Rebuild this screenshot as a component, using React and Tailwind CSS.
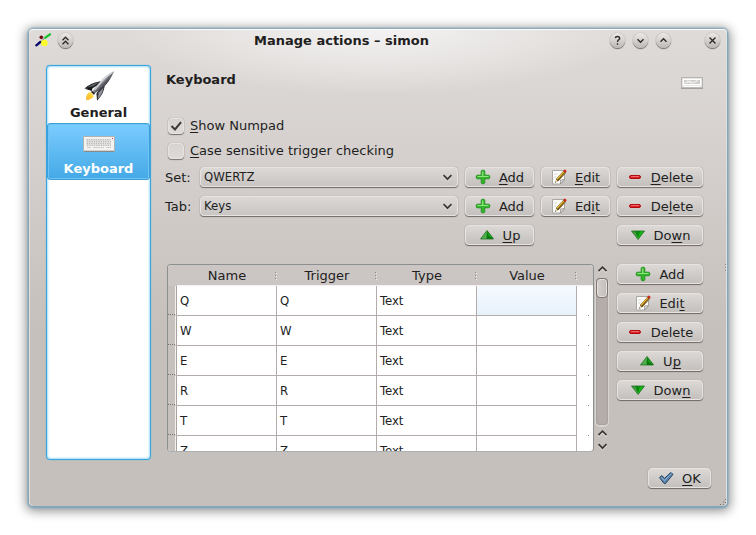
import React from "react";

const ROWS = ["Q", "W", "E", "R", "T", "Z"];

const BUTTON =
  "flex h-5 items-center justify-center gap-2 rounded-[4px] border border-[#e6e3e1] bg-linear-to-b from-[#dbd8d6] to-[#c4c0bd] text-[#221e1e] shadow-[0_1px_1px_#6f6966,0_0_1px_#968f8c]";

function Key({ children }) {
  return (
    <span className="underline underline-offset-2 [text-decoration-skip-ink:none]">{children}</span>
  );
}

/* Label with one underlined access key, given by its index. */
function Mnemonic({ text, at }) {
  if (at === undefined) return <span className="pt-[2px]">{text}</span>;
  return (
    <span className="pt-[2px]">
      {text.slice(0, at)}
      <Key>{text[at]}</Key>
      {text.slice(at + 1)}
    </span>
  );
}

function PlusIcon() {
  return (
    <svg width="16" height="16" viewBox="0 0 16 16" aria-hidden="true">
      <path
        d="M6.200 2.200q0-1 1.800-1t1.800 1v4h4q1 0 1 1.800t-1 1.800h-4v4q0 1-1.800 1t-1.800-1v-4h-4q-1 0-1-1.800t1-1.800h4z"
        fill="#35b52c"
        stroke="#168a12"
        strokeWidth=".8"
      />
      <path d="M7.700 2.500V7.500M2.500 7.500h11" stroke="#8be67c" strokeWidth="1.200" fill="none" />
    </svg>
  );
}

function MinusIcon() {
  return (
    <svg width="16" height="16" viewBox="0 0 16 16" aria-hidden="true">
      <rect x="2.500" y="6.500" width="11" height="3" rx="1.500" fill="#dc1f22" stroke="#b00a10" />
      <path d="M4 7.500h8" stroke="#ee6c6a" />
    </svg>
  );
}

function EditIcon() {
  return (
    <svg width="16" height="16" viewBox="0 0 16 16" aria-hidden="true">
      <path d="M1.500 1.500h12v9.500l-4 4h-8z" fill="#fbfbfa" stroke="#a9a6a3" />
      <path d="M13.500 10.500l-4 .5v4z" fill="#dddbd9" stroke="#8d8a87" strokeWidth=".7" />
      <path d="M3.200 5h3M3.200 8h2" stroke="#d6d4d2" />
      <path d="M4.500 13.200l1-3.700L12.600 1.800l2.300 1.900-7.200 8z" fill="#3a2c10" />
      <path d="M6 10.200l7-7.500" stroke="#e9b83b" strokeWidth="1.500" />
      <path d="M7.400 11.300l7-7.700" stroke="#c88f1c" strokeWidth=".8" />
      <path d="M4.300 13.500l.9-3 1.900 1.700z" fill="#f0d9a0" />
      <path d="M4.200 13.700l.4-1.300.8.800z" fill="#111" />
      <path d="M12.200 2l1.300-1.500q1.600.2 2.200 1.700l-1.200 1.600z" fill="#d0271f" />
    </svg>
  );
}

function UpIcon() {
  return (
    <svg width="16" height="16" viewBox="0 0 16 16" aria-hidden="true">
      <path d="M8 3.500L1.500 12h7z" fill="#4fae4c" />
      <path d="M8 3.500l6.500 8.500H7.500z" fill="#067a0a" />
      <path d="M8 3.500l1.500 5.500 5 2.500z" fill="#19a51a" />
      <path d="M8 3.500L1.500 12h13z" fill="none" stroke="#256e24" strokeWidth=".8" />
    </svg>
  );
}

function DownIcon() {
  return (
    <svg width="16" height="16" viewBox="0 0 16 16" aria-hidden="true">
      <path d="M1.500 4h7v8.500z" fill="#3f9d3c" />
      <path d="M7.500 4h7L8 12.500z" fill="#12b512" />
      <path d="M5 4h5l-2 7z" fill="#088a0c" />
      <path d="M1.500 4h13L8 12.500z" fill="none" stroke="#256e24" strokeWidth=".8" />
    </svg>
  );
}

function OkIcon() {
  return (
    <svg width="16" height="16" viewBox="0 0 16 16" aria-hidden="true">
      <path
        d="M1.500 7.500l2.200-1.800 3 2.600 6-5.700 2.300 1.700-7.300 9q-.9.800-1.800 0z"
        fill="#5c84ad"
        stroke="#24405f"
      />
      <path d="M3 7.300l3.500 3.200 7-6.800" fill="none" stroke="#93b6d6" strokeWidth="1" />
    </svg>
  );
}

function Chevron({ up, className }) {
  return (
    <svg width="11" height="7" viewBox="0 0 11 7" className={className} aria-hidden="true">
      <path
        d={up ? "M1.500 6.200l4-4 4 4" : "M1.500 2.200l4 4 4-4"}
        fill="none"
        stroke="#f2f0ef"
        strokeWidth="1.500"
      />
      <path
        d={up ? "M1.500 5.200l4-4 4 4" : "M1.500 1.200l4 4 4-4"}
        fill="none"
        stroke="#3b3735"
        strokeWidth="1.700"
      />
    </svg>
  );
}

const ICONS = {
  add: PlusIcon,
  edit: EditIcon,
  delete: MinusIcon,
  up: UpIcon,
  down: DownIcon,
  ok: OkIcon,
};

function IconButton({ icon, text, at, className = "" }) {
  const Icon = ICONS[icon];
  return (
    <button type="button" className={`${BUTTON} ${className}`}>
      <Icon />
      <Mnemonic text={text} at={at} />
    </button>
  );
}

function AppLogo() {
  return (
    <svg width="16" height="14" viewBox="0 0 48 42" aria-hidden="true">
      <path d="M4 37l12-10" stroke="#0a0a6e" strokeWidth="7" strokeLinecap="round" />
      <path d="M16 28l12-12" stroke="#222" strokeWidth="2" />
      <path d="M31 14L45 4" stroke="#15c328" strokeWidth="7" strokeLinecap="round" />
      <circle cx="19" cy="13" r="5.500" fill="#6e0d10" />
      <circle cx="28" cy="30" r="10" fill="#fbfb2c" />
    </svg>
  );
}

function Rocket() {
  return (
    <svg width="32" height="32" viewBox="0 0 96 96" aria-hidden="true">
      <defs>
        <linearGradient id="hull" x1=".3" y1=".3" x2=".65" y2=".65">
          <stop offset="0" stopColor="#55585e" />
          <stop offset=".35" stopColor="#d5d7dc" />
          <stop offset=".6" stopColor="#6e7178" />
          <stop offset="1" stopColor="#232427" />
        </linearGradient>
        <linearGradient id="flame" x1="1" y1="0" x2="0" y2="1">
          <stop offset="0" stopColor="#fff6a0" />
          <stop offset=".5" stopColor="#ffc928" />
          <stop offset="1" stopColor="#f5a000" stopOpacity=".7" />
        </linearGradient>
      </defs>
      <path d="M16 70q-10 10-8 24 16-2 24-12l-6-14z" fill="url(#flame)" />
      <path d="M55 34Q22 40 3 57l24 0 14-8z" fill="#1d1f22" />
      <path d="M50 37Q26 42 10 54l20-4z" fill="#5d6168" />
      <path d="M66 48Q62 76 42 95l-2-22 10-16z" fill="#2b2d31" />
      <path d="M62 54Q58 76 44 90l3-20z" fill="#8d9097" />
      <path d="M95 4Q66 16 51 37L27 66l7 7 28-20Q80 38 95 4z" fill="url(#hull)" />
      <path d="M91 8Q68 20 55 38L36 62" fill="none" stroke="#f3f4f6" strokeWidth="2" />
      <path d="M26 65L4 58l24-5z" fill="#17181a" />
      <path d="M25 66l9 9" stroke="#1b1c1e" strokeWidth="5" />
    </svg>
  );
}

function KeyboardIcon() {
  return (
    <svg width="32" height="16" viewBox="0 0 32 16" aria-hidden="true">
      <rect x=".5" y=".5" width="31" height="14.500" rx=".5" fill="#f3f2f1" stroke="#b3b1af" />
      <path d="M1 15.500h30" stroke="#8c8987" />
      <path d="M3.500 3.500h24M4 5.500h24M3.500 7.500h24M4 9.500h24" stroke="#b4b2b0" strokeDasharray="1.300 1" />
      <path d="M3 4.500h25M3 6.500h25M3 8.500h25" stroke="#dedcdb" />
      <path d="M4 11.500h4M10 11.500h11M23 11.500h5" stroke="#cfcdcb" />
      <path d="M29 2.500h1" stroke="#d33" />
    </svg>
  );
}

function SmallKeyboardIcon() {
  return (
    <svg width="22" height="12" viewBox="0 0 22 12" aria-hidden="true">
      <rect x=".5" y=".5" width="21" height="10.500" fill="#e9e8e7" stroke="#b5b2b0" />
      <path d="M0 11.200h22" stroke="#94908e" />
      <rect x="2.500" y="2.500" width="17" height="5" fill="#cfcecd" stroke="#fff" />
      <path d="M4 6l5-2 3 2 5-2.500M6 3.500l4 3" fill="none" stroke="#f8f8f8" />
      <path d="M3 9.500h16" stroke="#fff" />
    </svg>
  );
}

function TitleButton({ label, children, className = "" }) {
  return (
    <button
      type="button"
      aria-label={label}
      className={`flex size-[15px] shrink-0 items-center justify-center rounded-full bg-linear-to-b from-[#eceae9] to-[#bdb8b5] shadow-[0_1px_1px_#6f6a68,0_0_1px_#7d7774] ${className}`}
    >
      <svg width="15" height="15" viewBox="0 0 15 15" fill="none" stroke="#2f2b2a" strokeWidth="1.400">
        {children}
      </svg>
    </button>
  );
}

function TitleBar() {
  return (
    <header className="flex items-center pt-px pr-[7px] pl-[6px]">
      <AppLogo />
      <TitleButton label="Shade" className="ml-[7px]">
        <path d="M4.500 7.200l3-3 3 3M4.500 11.200l3-3 3 3" />
      </TitleButton>
      <h1 className="flex-1 pt-[2px] text-center leading-[18px] font-bold">Manage actions – simon</h1>
      <TitleButton label="Help">
        <path d="M5.300 5.200q.2-1.700 2.200-1.700t2.200 1.700q0 1-1.100 1.700T7.500 9M7.500 10.200v1.500" />
      </TitleButton>
      <TitleButton label="Minimize" className="ml-2">
        <path d="M4.500 6.200l3 3 3-3" />
      </TitleButton>
      <TitleButton label="Maximize" className="ml-2">
        <path d="M4.500 8.800l3-3 3 3" />
      </TitleButton>
      <TitleButton label="Close" className="ml-[34px]">
        <path d="M4.500 4.500l6 6M10.500 4.500l-6 6" />
      </TitleButton>
    </header>
  );
}

function Sidebar() {
  return (
    <nav className="w-[105px] shrink-0 rounded-[4px] border border-[#3aa5dc] bg-white shadow-[inset_0_0_2px_1px_#a5dcf8,0_0_1px_#3aa5dc]">
      <button type="button" className="flex h-[57px] w-full flex-col items-center pt-1 font-bold">
        <Rocket />
        <span className="pt-[2px] leading-5">General</span>
      </button>
      <button
        type="button"
        className="flex h-[57px] w-full flex-col items-center rounded-[3px] border border-[#3d9fd8] bg-linear-to-b from-[#7accff] to-[#43a9e6] pt-1 font-bold text-white shadow-[inset_0_0_0_1px_#6fc3f5]"
      >
        <span className="flex h-8 items-center">
          <KeyboardIcon />
        </span>
        <span className="leading-5">Keyboard</span>
      </button>
    </nav>
  );
}

function CheckOption({ id, text, checked }) {
  return (
    <div className="flex h-[25px] items-center pl-[3px]">
      <span className="relative flex size-4">
        <input
          id={id}
          type="checkbox"
          defaultChecked={checked}
          className="peer size-4 appearance-none rounded-[4px] border border-[#e6e3e1] bg-linear-to-b from-[#d6d3d1] to-[#dedbd9] shadow-[0_1px_1px_#77716e,0_0_1px_#968f8c]"
        />
        <svg
          viewBox="0 0 16 16"
          className="pointer-events-none absolute inset-0 hidden size-4 peer-checked:block"
          aria-hidden="true"
        >
          <path d="M3.500 8l3.500 3.500L13 4.200" fill="none" stroke="#3d3a38" strokeWidth="2" />
        </svg>
      </span>
      <label htmlFor={id} className="pl-[6px]">
        <Mnemonic text={text} at={0} />
      </label>
    </div>
  );
}

function Combo({ id, label, value }) {
  return (
    <>
      <label htmlFor={id} className="w-[28px] shrink-0 pt-[2px]">
        {label}
      </label>
      <span className="relative flex min-w-0 flex-1">
        <select
          id={id}
          defaultValue={value}
          className="h-5 w-full appearance-none rounded-[4px] border border-[#e6e3e1] bg-linear-to-b from-[#dbd8d6] to-[#c9c5c2] pl-[3px] font-['DejaVu_Sans_Condensed','DejaVu_Sans',sans-serif] leading-[18px] text-[#221e1e] shadow-[0_1px_1px_#6f6966,0_0_1px_#968f8c]"
        >
          <option>{value}</option>
        </select>
        <Chevron className="pointer-events-none absolute top-[7px] right-[5px]" />
      </span>
    </>
  );
}

function DotsV({ className = "" }) {
  return (
    <svg width="3" height="8" viewBox="0 0 3 8" className={className} aria-hidden="true">
      <path d="M1.500 0v8" stroke="#8a8481" strokeDasharray="1 2" />
      <path d="M2.500 1v7" stroke="#efedec" strokeDasharray="1 2" />
    </svg>
  );
}

function ActionsTable() {
  return (
    <div className="h-[188px] min-w-0 flex-1 overflow-hidden rounded-[4px] border border-[#8c8f90] border-b-[#aab0b2] bg-white">
      <table className="w-full table-fixed border-separate border-spacing-0">
        <colgroup>
          <col className="w-[9px]" />
          <col className="w-[100px]" />
          <col className="w-[100px]" />
          <col className="w-[100px]" />
          <col className="w-[100px]" />
          <col />
        </colgroup>
        <thead>
          <tr className="h-[21px] bg-[#cbc6c3]">
            <td className="p-0" />
            {["Name", "Trigger", "Type", "Value"].map((h) => (
              <th
                key={h}
                className="relative border-b border-[#f4f2f1] p-0 pt-[2px] leading-[18px] font-normal"
              >
                {h}
                <DotsV className="absolute top-[7px] right-0" />
              </th>
            ))}
            <td className="border-b border-[#f4f2f1] p-0" />
          </tr>
        </thead>
        <tbody className="font-['DejaVu_Sans_Condensed','DejaVu_Sans',sans-serif]">
          {ROWS.map((key, i) => (
            <tr key={key} className="h-[30px]">
              <th
                scope="row"
                aria-label={key}
                className="border-r border-b border-r-[#aaa29f] border-b-[#c6c1bd] bg-[#c6c1bd] p-0 align-bottom shadow-[inset_-1px_0_0_#f4f2f1]"
              >
                <span className="block h-px w-[7px] border-b border-dotted border-[#77716e]" />
              </th>
              <td className="border-r border-b border-[#b3acaa] p-0 pl-[3px]">{key}</td>
              <td className="border-r border-b border-[#b3acaa] p-0 pl-[3px]">{key}</td>
              <td className="border-r border-b border-[#b3acaa] p-0 pl-[3px]">Text</td>
              <td
                className={
                  i === 0
                    ? "border-r border-b border-[#b3acaa] bg-linear-to-b from-[#f5faff] to-[#e7f1fa] p-0"
                    : "border-r border-b border-[#b3acaa] p-0"
                }
              />
              <td className="p-0 pr-1 align-bottom">
                <span className="ml-auto block size-px bg-[#8a8481]" />
              </td>
            </tr>
          ))}
        </tbody>
      </table>
    </div>
  );
}

function ScrollBar() {
  return (
    <div className="flex h-[188px] w-4 flex-col items-center pt-[2px]">
      <Chevron up />
      <div className="mt-[5px] flex w-3 flex-1 rounded-[4px] bg-[#b5adaa] shadow-[inset_0_0_2px_#8f8784,0_1px_0_1px_#d8d4d1]">
        <div className="h-5 w-3 rounded-[4px] border border-[#7d7673] bg-linear-to-r from-[#d3cfcd] to-[#c3bebb] shadow-[inset_0_0_0_1px_#e3e0de]" />
      </div>
      <Chevron up className="mt-[5px]" />
      <Chevron className="mt-[6px] mb-[2px]" />
    </div>
  );
}

function KeyboardPage() {
  return (
    <main className="min-w-0 flex-1 pb-2">
      <div className="flex h-7 items-center justify-between">
        <h2 className="pt-[2px] pl-px font-bold">Keyboard</h2>
        <span className="pt-2">
          <SmallKeyboardIcon />
        </span>
      </div>
      <div className="mt-5">
        <CheckOption id="numpad" text="Show Numpad" checked />
        <CheckOption id="case" text="Case sensitive trigger checking" />
      </div>
      <div className="mt-1 flex flex-col gap-[9px]">
        <div className="flex h-5 items-center gap-[7px]">
          <Combo id="set" label="Set:" value="QWERTZ" />
          <IconButton icon="add" text="Add" at={0} className="w-[69px]" />
          <IconButton icon="edit" text="Edit" at={0} className="w-[69px]" />
          <IconButton icon="delete" text="Delete" at={0} className="w-[86px]" />
        </div>
        <div className="flex h-5 items-center gap-[7px]">
          <Combo id="tab" label="Tab:" value="Keys" />
          <IconButton icon="add" text="Add" className="w-[69px]" />
          <IconButton icon="edit" text="Edit" at={2} className="w-[69px]" />
          <IconButton icon="delete" text="Delete" at={2} className="w-[86px]" />
        </div>
        <div className="flex items-center justify-end gap-[83px]">
          <IconButton icon="up" text="Up" at={0} className="w-[69px]" />
          <IconButton icon="down" text="Down" at={2} className="w-[86px]" />
        </div>
      </div>
      <div className="mt-[19px] flex pl-[2px]">
        <ActionsTable />
        <ScrollBar />
        <div className="ml-[7px] flex w-[86px] flex-col gap-[9px]">
          <IconButton icon="add" text="Add" />
          <IconButton icon="edit" text="Edit" at={3} />
          <IconButton icon="delete" text="Delete" />
          <IconButton icon="up" text="Up" at={1} />
          <IconButton icon="down" text="Down" at={3} />
        </div>
      </div>
    </main>
  );
}

export default function App() {
  return (
    <div className="min-h-screen bg-white p-[29px] font-['DejaVu_Sans',sans-serif] text-[13px] leading-[18px] text-[#221e1e]">
      <div className="relative rounded-[4px] bg-[radial-gradient(250px_66px_at_50%_0,#f4f3f3,#f4f3f300),linear-gradient(#dfdbd8,#d3cecb_150px,#c6c0bc_300px)] shadow-[inset_0_1px_0_#fbfbfb,inset_1px_0_0_#e2dfdd,inset_-1px_0_0_#e2dfdd,0_0_2px_1px_#7fa6bb,0_1px_2px_1px_#7fa6bb,0_2px_11px_3px_#00000070]">
        <TitleBar />
        <div className="mt-[15px] flex gap-[14px] pr-6 pl-[17px]">
          <Sidebar />
          <KeyboardPage />
        </div>
        <footer className="flex justify-end pt-2 pr-4 pb-[18px]">
          <IconButton icon="ok" text="OK" at={0} className="w-[63px]" />
        </footer>
        <DotsV className="absolute top-[235px] right-0" />
        <svg className="absolute right-px bottom-px" width="6" height="6" viewBox="0 0 6 6" aria-hidden="true">
          <path d="M0 5h1v1H0zM3 5h1v1H3zM3 2.500h1v1H3zM5 0h1v1H5zM5 3h1v1H5z" fill="#77716e" />
        </svg>
      </div>
    </div>
  );
}
